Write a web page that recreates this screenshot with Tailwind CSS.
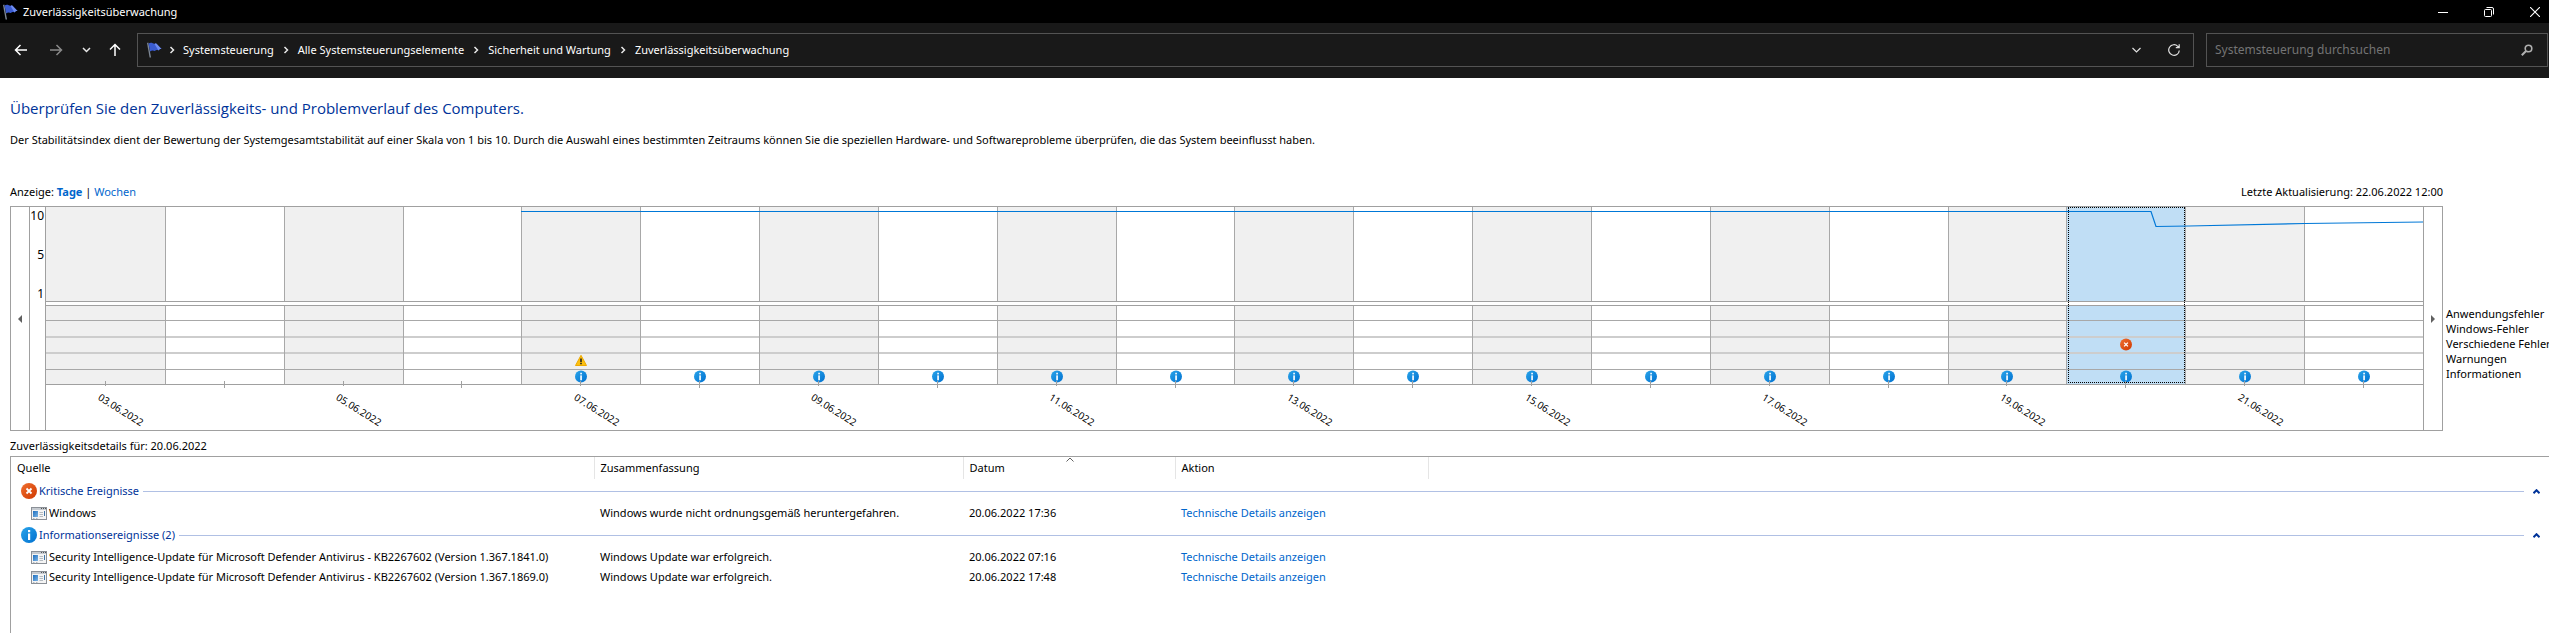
<!DOCTYPE html>
<html lang="de">
<head>
  <meta charset="UTF-8" />
  <title>Zuverlässigkeitsüberwachung</title>
  <script src="https://cdn.jsdelivr.net/npm/@tailwindcss/browser@4"></script>
</head>
<body class="bg-white text-black text-[11px] leading-4 font-['Noto_Sans',sans-serif] min-h-screen flex flex-col overflow-hidden whitespace-nowrap">

  <!-- Shared icons -->
  <svg class="absolute w-0 h-0">
    <defs>
      <linearGradient id="gInfo" x1="0" y1="0" x2="1" y2="1"><stop offset="0" stop-color="#2aa5ea" /><stop offset="1" stop-color="#0070d0" /></linearGradient>
      <linearGradient id="gError" x1="0" y1="0" x2="1" y2="1"><stop offset="0" stop-color="#f07030" /><stop offset="1" stop-color="#cf3800" /></linearGradient>
      <linearGradient id="gApp" x1="0" y1="0" x2="1" y2="1"><stop offset="0" stop-color="#1d6fc0" /><stop offset="1" stop-color="#7db4e4" /></linearGradient>
    </defs>
    <symbol id="flag" viewBox="0 0 16 16">
      <path d="M1 1l1.300-.4L5 15.600H3.600z" fill="#7d8794" />
      <path d="M2.500 1.500C5 0 6.500 1 8.500 2c.6-.5 1.200-.6 2-.3L15.500 7c-1.500-.3-2.500.3-3 1.500-1.500-.8-2.700-.6-3.600.6C7 8 5.500 8.300 4.200 9.500z" fill="#3a5bd0" />
      <path d="M8.500 2c.6-.5 1.200-.6 2-.3L15.500 7c-1.500-.3-2.500.3-3 1.500z" fill="#6f8df0" />
    </symbol>
    <symbol id="info" viewBox="0 0 16 16">
      <circle cx="8" cy="8" r="8" fill="url(#gInfo)" />
      <rect x="7" y="3" width="2.200" height="2.200" fill="#fff" />
      <rect x="7" y="6.500" width="2.200" height="6.500" fill="#fff" />
    </symbol>
    <symbol id="error" viewBox="0 0 16 16">
      <circle cx="8" cy="8" r="8" fill="url(#gError)" />
      <path d="M5.500 5.500l5 5M10.500 5.500l-5 5" stroke="#fff" stroke-width="1.800" />
    </symbol>
    <symbol id="warning" viewBox="0 0 12 12">
      <path d="M6 .8L11.500 11H.5z" fill="#fcc010" stroke="#eda900" stroke-linejoin="round" />
      <path d="M5.200 4h1.600v3.500H5.200zM5.200 8.300h1.600v1.500H5.200z" fill="#222" />
    </symbol>
    <symbol id="app" viewBox="0 0 16 13">
      <rect x=".5" y=".5" width="15" height="12" fill="#f4f4f4" stroke="#8b9097" />
      <path d="M1 2h14" stroke="#c5cad0" stroke-width="2" />
      <path d="M10 1.500h1M12 1.500h1M14 1.500h1" stroke="#555" />
      <rect x="2" y="4" width="5" height="6" fill="url(#gApp)" />
      <path d="M8.500 5.500H12M8.500 7.500H12M8.500 9.500H12M2 11.500h1.500M5 11.500h1.500" stroke="#b4bac0" />
      <path d="M13.500 4v5" stroke="#3f74a8" />
    </symbol>
    <symbol id="crumb" viewBox="0 0 6 8"><path d="M1.500 1l3 3-3 3" fill="none" stroke="#e8e8e8" stroke-width="1.500" /></symbol>
  </svg>

  <!-- Title bar -->
  <header class="h-[23px] bg-black text-white flex items-center pl-[2px]">
    <svg class="w-4 h-4 mr-[5px]"><use href="#flag" /></svg>
    <h1>Zuverlässigkeitsüberwachung</h1>
    <div class="ml-auto flex">
      <button aria-label="Minimieren" class="w-[46px] h-5 flex items-center justify-center"><svg class="w-[10px] h-[10px]" viewBox="0 0 10 10"><path d="M0 5.500h10" stroke="#fff" /></svg></button>
      <button aria-label="Verkleinern" class="w-[46px] h-5 flex items-center justify-center"><svg class="w-[10px] h-[10px]" viewBox="0 0 10 10" fill="none" stroke="#fff"><rect x=".5" y="2.500" width="7" height="7" rx="1" /><path d="M2.500.5H8A1.500 1.500 0 0 1 9.500 2v5.500" /></svg></button>
      <button aria-label="Schließen" class="w-[28px] ml-[9px] h-5 flex items-center justify-center"><svg class="w-[10px] h-[10px]" viewBox="0 0 10 10"><path d="M0 0l10 10M10 0L0 10" stroke="#fff" stroke-width="1.100" /></svg></button>
    </div>
  </header>

  <!-- Navigation -->
  <nav class="h-[55px] bg-[#191919] text-white flex items-start pt-[10px] pr-px">
    <div class="w-[137px] h-[34px] flex items-center pl-[14px]">
      <button aria-label="Zurück" class="w-[35px]"><svg class="w-[14px] h-[12px]" viewBox="0 0 14 12" fill="none" stroke="#fff" stroke-width="1.500"><path d="M13 6H1.500M6.500 1l-5 5 5 5" /></svg></button>
      <button aria-label="Vorwärts" class="w-[33px]"><svg class="w-[14px] h-[12px]" viewBox="0 0 14 12" fill="none" stroke="#8a8a8a" stroke-width="1.500"><path d="M1 6h11.500M7.500 1l5 5-5 5" /></svg></button>
      <button aria-label="Verlauf" class="w-[27px]"><svg class="w-[9px] h-[6px]" viewBox="0 0 9 6" fill="none" stroke="#e8e8e8" stroke-width="1.500"><path d="M1 1l3.500 3.500L8 1" /></svg></button>
      <button aria-label="Nach oben"><svg class="w-[12px] h-[14px]" viewBox="0 0 12 14" fill="none" stroke="#fff" stroke-width="1.500"><path d="M6 13V1.500M1 6.500l5-5 5 5" /></svg></button>
    </div>
    <div class="flex-1 h-[34px] border border-[#535353] flex items-center pl-[8px]">
      <svg class="w-4 h-4"><use href="#flag" /></svg>
      <svg class="w-[6px] h-[8px] ml-[7px] mr-[8px]"><use href="#crumb" /></svg>
      <a href="#">Systemsteuerung</a>
      <svg class="w-[6px] h-[8px] ml-[9px] mr-[9px]"><use href="#crumb" /></svg>
      <a href="#">Alle Systemsteuerungselemente</a>
      <svg class="w-[6px] h-[8px] ml-[9px] mr-[9px]"><use href="#crumb" /></svg>
      <a href="#">Sicherheit und Wartung</a>
      <svg class="w-[6px] h-[8px] ml-[9px] mr-[9px]"><use href="#crumb" /></svg>
      <a href="#">Zuverlässigkeitsüberwachung</a>
      <button aria-label="Adressverlauf" class="ml-auto mr-[27px]"><svg class="w-[9px] h-[6px]" viewBox="0 0 9 6" fill="none" stroke="#e0e0e0" stroke-width="1.200"><path d="M.5 1l4 4 4-4" /></svg></button>
      <button aria-label="Aktualisieren" class="mr-[13px]"><svg class="w-[12px] h-[12px]" viewBox="0 0 12 12" fill="none" stroke="#e0e0e0" stroke-width="1.200"><path d="M11.300 6.500A5.300 5.300 0 1 1 9.800 2.300L11 3.500M11.200.3v3.400H7.800" /></svg></button>
    </div>
    <div class="w-[342px] ml-[12px] h-[34px] border border-[#535353] flex items-center pl-[8px] pr-[14px]">
      <input type="text" aria-label="Suchen" placeholder="Systemsteuerung durchsuchen" class="flex-1 bg-transparent outline-none text-[12px] placeholder:text-[#747474]" />
      <svg class="w-[12px] h-[12px]" viewBox="0 0 12 12" fill="none" stroke="#b0b0b0"><circle cx="7.500" cy="4.500" r="3.300" stroke-width="1.600" /><path d="M5 7L.8 11.200" stroke-width="2" /></svg>
    </div>
  </nav>

  <main class="flex-1 flex flex-col pl-[10px]">
    <h2 class="mt-[20px] font-['Open_Sans',sans-serif] text-[15px] leading-5 text-[#003399]">Überprüfen Sie den Zuverlässigkeits- und Problemverlauf des Computers.</h2>
    <p class="mt-[14px]">Der Stabilitätsindex dient der Bewertung der Systemgesamtstabilität auf einer Skala von 1 bis 10. Durch die Auswahl eines bestimmten Zeitraums können Sie die speziellen Hardware- und Softwareprobleme überprüfen, die das System beeinflusst haben.</p>

    <div class="mt-[36px] mr-[106px] flex justify-between">
      <div>Anzeige: <a href="#" class="font-bold text-[#0066cc]">Tage</a> | <a href="#" class="text-[#0066cc]">Wochen</a></div>
      <div>Letzte Aktualisierung: 22.06.2022 12:00</div>
    </div>

    <!-- Chart -->
    <div class="mt-[6px] flex">
      <div class="flex-1 h-[225px] flex border border-[#a0a0a0]">
        <button aria-label="Zurückblättern" class="w-[19px] border-r border-[#a0a0a0] flex items-center justify-center"><svg class="w-[4px] h-[8px]" viewBox="0 0 4 8"><path d="M4 0v8L0 4z" fill="#606060" /></svg></button>
        <div class="w-[16px] border-r border-[#a0a0a0] pr-px pt-px flex flex-col items-end gap-[23px] text-[12px]">
          <span>10</span><span>5</span><span>1</span>
        </div>
        <div class="flex-1 relative">
          <div id="days" class="flex h-full"></div>
          <svg class="absolute inset-x-0 top-0 w-full h-[94px] pointer-events-none" viewBox="0 0 2377 94" preserveAspectRatio="none">
            <path d="M475 4.500H2105L2110 19.500L2143 19L2259 16.500L2377 15" fill="none" stroke="#0078d7" stroke-width="1.200" vector-effect="non-scaling-stroke" />
          </svg>
        </div>
        <button aria-label="Weiterblättern" class="w-[19px] border-l border-[#a0a0a0] flex items-center justify-center"><svg class="w-[4px] h-[8px]" viewBox="0 0 4 8"><path d="M0 0v8l4-4z" fill="#606060" /></svg></button>
      </div>
      <ul class="w-[106px] pl-[3px] pt-[100px] leading-[15px]">
        <li>Anwendungsfehler</li>
        <li>Windows-Fehler</li>
        <li>Verschiedene Fehler</li>
        <li>Warnungen</li>
        <li>Informationen</li>
      </ul>
    </div>

    <!-- Details -->
    <h3 class="mt-[7px]">Zuverlässigkeitsdetails für: 20.06.2022</h3>
    <div class="mt-[2px] flex-1 border-t border-l border-[#a0a0a0]">
      <table class="w-full table-fixed text-left">
        <colgroup>
          <col class="w-[583px]" /><col class="w-[369px]" /><col class="w-[212px]" /><col class="w-[253px]" /><col />
        </colgroup>
        <thead>
          <tr class="h-[22px]">
            <th class="font-normal pl-[6px] border-r border-[#e5e5e5]">Quelle</th>
            <th class="font-normal pl-[6px] border-r border-[#e5e5e5]">Zusammenfassung</th>
            <th class="font-normal pl-[6px] border-r border-[#e5e5e5] relative">Datum
              <svg class="absolute left-[102px] top-0 w-[8px] h-[5px]" viewBox="0 0 8 5"><path d="M.5 4.500L4 1l3.500 3.500" fill="none" stroke="#606060" /></svg>
            </th>
            <th class="font-normal pl-[6px] border-r border-[#e5e5e5]">Aktion</th>
            <th></th>
          </tr>
        </thead>
        <tbody id="events"></tbody>
      </table>
    </div>
  </main>

  <script>
    const dayCount = 20;
    const selectedDay = 17;
    const dates = { 0: "03", 2: "05", 4: "07", 6: "09", 8: "11", 10: "13", 12: "15", 14: "17", 16: "19", 18: "21" };
    const rowLines = ["border-b border-[#a8a8a8]", "border-b-2 border-[#cdcdcd]", "border-b-2 border-[#cdcdcd]", "border-b border-[#a8a8a8]", ""];

    function dayIcon(day, row) {
      if (row === 4 && day >= 4) return "info";
      if (row === 3 && day === 4) return "warning";
      if (row === 2 && day === selectedDay) return "error";
      return "";
    }

    document.getElementById("days").innerHTML = Array.from({ length: dayCount }, (_, d) => {
      const fill = d === selectedDay ? "bg-[#c0def5]" : d % 2 ? "bg-white" : "bg-[#f0f0f0]";
      const edge = d > 0 ? "border-l border-l-[#a8a8a8]" : "";
      const rows = rowLines.map((line, r) => {
        const icon = dayIcon(d, r);
        return `<span class="flex-1 min-h-0 flex items-start justify-center ${line}">${icon ? `<svg class="w-[12px] h-[13px]"><use href="#${icon}" /></svg>` : ""}</span>`;
      }).join("");
      return `
        <button class="relative flex-1 flex flex-col">
          <span class="block w-full h-[95px] border-b border-b-[#a0a0a0]"><span class="block h-full ${fill} ${edge}"></span></span>
          <span class="mt-[3px] w-full h-[80px] border-y border-[#a0a0a0] flex"><span class="flex-1 flex flex-col ${fill} ${edge}">${rows}</span></span>
          <span class="w-px -mt-[4px] ${d % 2 ? "h-[7px]" : "h-[5px]"} bg-[#a0a0a0] self-center"></span>
          ${dates[d] ? `<span class="absolute left-1/2 top-[183px] -ml-[2px] origin-top-left rotate-[32deg] text-[10px] leading-[14px]">${dates[d]}.06.2022</span>` : ""}
          ${d === selectedDay ? `<span class="absolute left-[2px] right-0 top-0 h-[176px] border border-dotted border-black"></span>` : ""}
        </button>`;
    }).join("");

    const groups = [
      { icon: "error", title: "Kritische Ereignisse", rows: [
        ["Windows", "Windows wurde nicht ordnungsgemäß heruntergefahren.", "20.06.2022 17:36"]
      ] },
      { icon: "info", title: "Informationsereignisse (2)", rows: [
        ["Security Intelligence-Update für Microsoft Defender Antivirus - KB2267602 (Version 1.367.1841.0)", "Windows Update war erfolgreich.", "20.06.2022 07:16"],
        ["Security Intelligence-Update für Microsoft Defender Antivirus - KB2267602 (Version 1.367.1869.0)", "Windows Update war erfolgreich.", "20.06.2022 17:48"]
      ] }
    ];

    document.getElementById("events").innerHTML = groups.map(g => `
      <tr class="h-[24px]">
        <td colspan="5">
          <div class="flex items-center pl-[10px] pr-[9px] text-[#003399]">
            <svg class="w-4 h-4 mr-[2px]"><use href="#${g.icon}" /></svg>${g.title}
            <span class="flex-1 h-px ml-[4px] mr-[9px] bg-[#b0c0e4]"></span>
            <button aria-label="Gruppe reduzieren"><svg class="w-[7px] h-[5px]" viewBox="0 0 7 5"><path d="M.5 4.200L3.500 1.200l3 3" fill="none" stroke="#003399" stroke-width="2" /></svg></button>
          </div>
        </td>
      </tr>
      ${g.rows.map(r => `
        <tr class="h-5">
          <td><div class="flex items-center pl-[20px]"><svg class="w-[16px] h-[13px] mr-[2px]"><use href="#app" /></svg>${r[0]}</div></td>
          <td class="pl-[6px]">${r[1]}</td>
          <td class="pl-[6px]">${r[2]}</td>
          <td class="pl-[6px]"><a href="#" class="text-[#0066cc]">Technische Details anzeigen</a></td>
          <td></td>
        </tr>`).join("")}
    `).join("");
  </script>
</body>
</html>
